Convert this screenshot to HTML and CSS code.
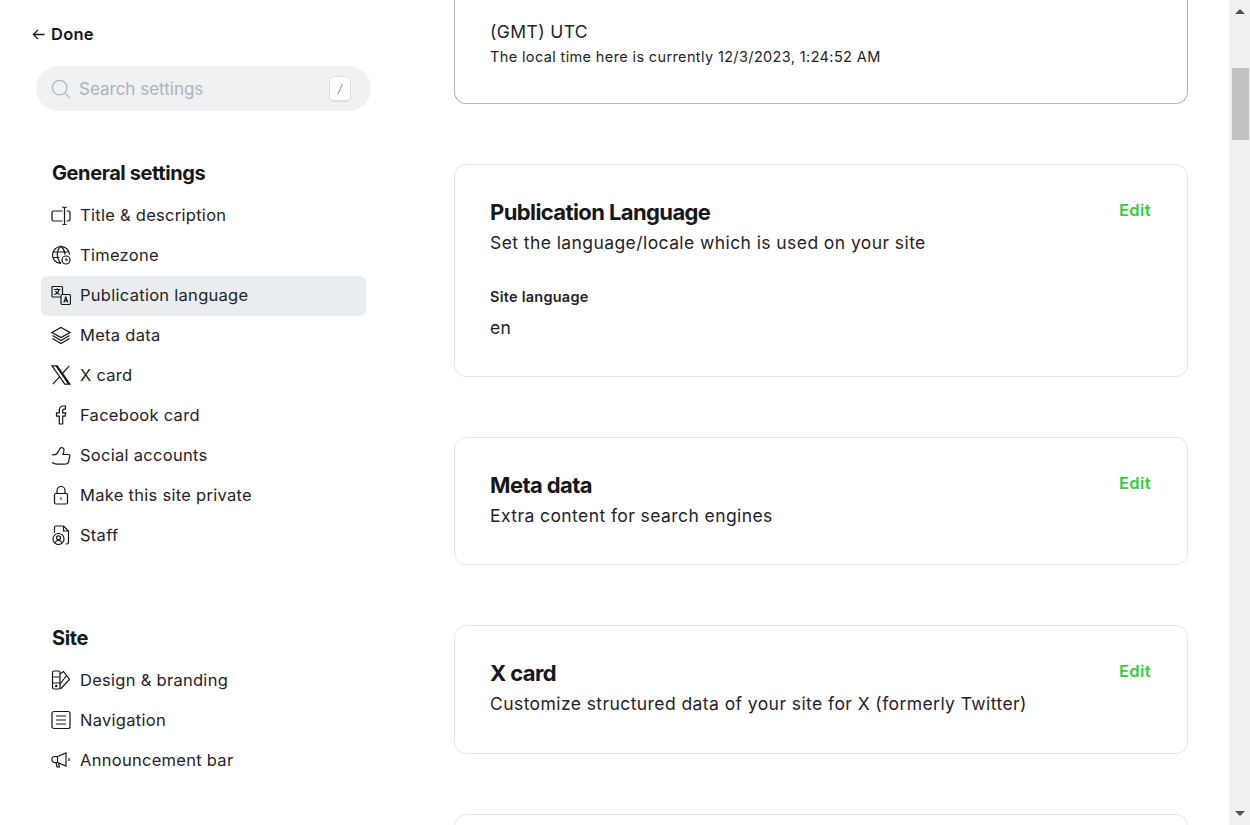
FILE: index.html

```html
<!DOCTYPE html>
<html lang="en">
<head>
    <meta charset="UTF-8">
    <title>Settings</title>
    <link rel="stylesheet" href="styles.css">
</head>
<body>
<div class="page">
    <aside class="sidebar">
        <a class="done" href="#">
            <svg class="done-icon" viewBox="0 0 14 14"><path d="M13.5 7H1.500M6.500 2 1.500 7l5 5"/></svg>
            Done
        </a>
        <div class="search">
            <svg class="search-icon" viewBox="0 0 22 22"><circle cx="9.500" cy="9.500" r="8"/><path d="m15.500 15.500 5.500 5.500"/></svg>
            <span class="search-text">Search settings</span>
            <kbd class="search-key">/</kbd>
        </div>

        <h3 class="nav-title">General settings</h3>
        <ul class="nav-list">
            <li class="nav-item">
                <svg class="nav-icon" viewBox="0 0 20 20"><path d="M11.500 6H2.500A1.500 1.500 0 0 0 1 7.500v7A1.500 1.500 0 0 0 2.500 16h9M15.500 6h2A1.500 1.500 0 0 1 19 7.500v7a1.500 1.500 0 0 1-1.500 1.500h-2M13.500 3v16M11 2c1.200 0 2.500.3 2.500 1.300C13.500 2.300 14.800 2 16 2M11 20c1.200 0 2.500-.3 2.500-1.300 0 1 1.300 1.300 2.500 1.300"/></svg>
                Title &amp; description
            </li>
            <li class="nav-item">
                <svg class="nav-icon" viewBox="0 0 20 20"><path d="M18.500 9.500a8.500 8.500 0 1 0-9 9M1.500 7h17M1.500 12.500h7M10 1c-5 5-5 12 0 17.500M10 1c2.500 2.500 3.800 5.500 4 8.500"/><circle cx="15" cy="15" r="4"/><path d="M15 13v2.200h1.800"/></svg>
                Timezone
            </li>
            <li class="nav-item active">
                <svg class="nav-icon" viewBox="0 0 20 20"><rect x="1" y="1.500" width="10.500" height="10.500" rx="1"/><rect x="10" y="9.500" width="9.500" height="10" rx="1.500" fill="#eaedf0"/><path d="M3 4.500h6.500M6.200 3.300v1.200M8 4.700C7.500 7 5.500 9 3.300 9.500M4.500 6c.8 1.500 2.500 3 4.300 3.500M12.800 17.500l2-5.500 2 5.500M13.500 15.800h2.800"/></svg>
                Publication language
            </li>
            <li class="nav-item">
                <svg class="nav-icon" viewBox="0 0 20 20"><path d="m10 2.500 9 5-9 5-9-5zM1.500 10.500l8.500 5 8.500-5M1.500 13.500l8.500 5 8.500-5"/></svg>
                Meta data
            </li>
            <li class="nav-item">
                <svg class="nav-icon" viewBox="0 0 20 20"><path d="M1 .800h5.200L19 19.200h-5.200zM3.400 .800h1.600l12.700 18.400M18.200 .8 11 9M9 11.300 1.800 19.200"/></svg>
                X card
            </li>
            <li class="nav-item">
                <svg class="nav-icon" viewBox="0 0 20 20"><path d="M14.500 1h-2.200A4 4 0 0 0 8.300 5v2.800H5.500v3.400h2.800V19h3.400v-7.800h2.400l.6-3.400h-3V5.500c0-.8.500-1.300 1.300-1.300h1.500z"/></svg>
                Facebook card
            </li>
            <li class="nav-item">
                <svg class="nav-icon" viewBox="0 0 20 20"><path d="M1 10c2 0 4-.3 5-1.500 1.300-1.500 2-3 3-5 .7-1.400 4-1 4 1 0 1.500-.5 3.500-1 5h5.500c1 0 1.500.7 1.300 1.700l-1.300 6c-.2 1-1 1.600-2 1.700-4 .3-9 .5-12-.3L1 17.500"/></svg>
                Social accounts
            </li>
            <li class="nav-item">
                <svg class="nav-icon" viewBox="0 0 20 20"><rect x="3.500" y="8.500" width="13" height="10.500" rx="1.500"/><path d="M6 8.500V5.500a4 4 0 0 1 8 0v3M10 12.500v2.200"/></svg>
                Make this site private
            </li>
            <li class="nav-item">
                <svg class="nav-icon" viewBox="0 0 20 20"><path d="M3.500 8V2.500A1.500 1.500 0 0 1 5 1h7.500l5 5v11.500a1.500 1.500 0 0 1-1.500 1.500h-1.500M12.500 1v5h5"/><circle cx="7.500" cy="14" r="5.500"/><circle cx="7.500" cy="12.800" r="2"/><path d="M4 17.500c.8-1.500 2-2 3.500-2s2.700.5 3.500 2"/></svg>
                Staff
            </li>
        </ul>

        <h3 class="nav-title nav-title-site">Site</h3>
        <ul class="nav-list">
            <li class="nav-item">
                <svg class="nav-icon" viewBox="0 0 20 20"><rect x="1.500" y="1" width="7.500" height="18" rx="1.500"/><path d="M1.500 7h7.500M1.500 13h7.500M9 4l3.500-2.500 6 8-9 9.500M9 14l7-9"/><circle cx="5.200" cy="16" r=".6"/></svg>
                Design &amp; branding
            </li>
            <li class="nav-item">
                <svg class="nav-icon" viewBox="0 0 20 20"><rect x="1" y="1.500" width="18" height="17" rx="2"/><path d="M5 6h10M5 10h10M5 14h10"/></svg>
                Navigation
            </li>
            <li class="nav-item">
                <svg class="nav-icon" viewBox="0 0 20 20"><path d="M6.500 6.500 15 3v13L6.500 12.500H3.500A2.500 2.500 0 0 1 1 9.500 2.500 2.500 0 0 1 3.500 6.500zM6.500 6.500v6M5 12.500 6 17h2.500l-1-4M18 8v3"/></svg>
                Announcement bar
            </li>
        </ul>
    </aside>

    <main class="content">
        <section class="card card-timezone">
            <p class="value">(GMT) UTC</p>
            <p class="note">The local time here is currently 12/3/2023, 1:24:52 AM</p>
        </section>

        <section class="card card-language">
            <div class="card-head">
                <div>
                    <h2 class="card-title">Publication Language</h2>
                    <p class="card-desc">Set the language/locale which is used on your site</p>
                </div>
                <a class="edit" href="#">Edit</a>
            </div>
            <h4 class="field-label">Site language</h4>
            <p class="value">en</p>
        </section>

        <section class="card">
            <div class="card-head">
                <div>
                    <h2 class="card-title">Meta data</h2>
                    <p class="card-desc">Extra content for search engines</p>
                </div>
                <a class="edit" href="#">Edit</a>
            </div>
        </section>

        <section class="card">
            <div class="card-head">
                <div>
                    <h2 class="card-title">X card</h2>
                    <p class="card-desc">Customize structured data of your site for X (formerly Twitter)</p>
                </div>
                <a class="edit" href="#">Edit</a>
            </div>
        </section>

        <section class="card card-last"></section>
    </main>

    <div class="scrollbar">
        <span class="arrow-up"></span>
        <span class="thumb"></span>
        <span class="arrow-down"></span>
    </div>
</div>
</body>
</html>
```

FILE: styles.css

```css
* { box-sizing: border-box; }
html, body { margin: 0; height: 100%; overflow: hidden; }
body { font-family: Inter, "Liberation Sans", sans-serif; background-color: #fff; color: #15171a; }
h2, h3, h4, p, ul { margin: 0; padding: 0; }
a { text-decoration: none; color: inherit; }

.page { display: flex; height: 825px; overflow: hidden; }

/* sidebar */
.sidebar { width: 454px; flex: none; padding: 24px 0 0 32px; }
.done { display: flex; align-items: center; gap: 6px; height: 20px; font-size: 16.5px; font-weight: 600; letter-spacing: 0.25px; color: #15171a; }
.done-icon { width: 13px; height: 13px; fill: none; stroke: #15171a; stroke-width: 1.4; }
.search { display: flex; align-items: center; width: 335px; height: 45px; margin: 22px 0 0 4px; padding: 0 20px 0 15px; background-color: #eff1f3; border-radius: 23px; }
.search-icon { width: 20px; height: 20px; fill: none; stroke: #abb4be; stroke-width: 1.2; }
.search-text { flex: 1; margin-left: 8px; font-size: 17px; color: #abb4be; }
.search-key { width: 22px; height: 26px; font-family: Inter, sans-serif; font-size: 12px; font-style: italic; line-height: 24px; text-align: center; color: #7c8b9a; background-color: #fff; border: 1px solid #dde1e5; border-bottom-width: 2px; border-radius: 5px; }
.nav-title { margin: 50px 0 0 20px; font-size: 20px; line-height: 24px; font-weight: 700; letter-spacing: -0.4px; color: #15171a; }
.nav-title-site { margin-top: 70px; }
.nav-list { list-style: none; margin: 11px 0 0 9px; width: 325px; }
.nav-item { display: flex; align-items: center; height: 40px; padding: 0 0 2px 10px; font-size: 16.5px; letter-spacing: 0.28px; color: #1f2327; border-radius: 6px; }
.nav-item.active { background-color: #eaedf0; }
.nav-icon { width: 20px; height: 20px; margin-right: 9px; flex: none; fill: none; stroke: #15171a; stroke-width: 1.2; }

/* main column */
.content { flex: none; width: 734px; }
.card { padding: 34px 36px 0 35px; margin-bottom: 60px; border: 1px solid #e3e6e9; border-radius: 12px; height: 128.4px; }
.card-timezone { height: 104px; padding-top: 20px; border-color: #aeb7c1; border-top: 0; border-radius: 0 0 12px 12px; }
.card-language { height: 213px; }
.card-head { display: flex; justify-content: space-between; align-items: flex-start; }
.card-title { font-size: 22px; line-height: 27px; font-weight: 700; letter-spacing: -0.6px; color: #15171a; }
.card-desc { margin-top: 5px; font-size: 17.5px; line-height: 24px; letter-spacing: 0.42px; color: #1f2327; }
.edit { margin-top: 1px; font-size: 16.5px; line-height: 20px; font-weight: 600; letter-spacing: 0.4px; color: #30cf43; }
.field-label { margin-top: 32px; font-size: 14.5px; line-height: 20px; font-weight: 600; letter-spacing: 0.25px; color: #1f2327; }
.value { font-size: 17.5px; line-height: 24px; letter-spacing: 0.4px; color: #1f2327; }
.card-language .value { margin-top: 9px; }
.note { margin-top: 3px; font-size: 14.5px; line-height: 20px; letter-spacing: 0.37px; color: #1f2327; }

/* scrollbar */
.scrollbar { position: fixed; top: 0; right: 0; bottom: 0; width: 21px; display: flex; flex-direction: column; align-items: center; background-color: #f1f1f1; }
.arrow-up { margin-top: 9px; border: 5px solid transparent; border-top: 0; border-bottom-color: #505050; }
.thumb { width: 17px; height: 72px; margin: 54px 0 0 1px; background-color: #c1c1c1; }
.arrow-down { margin-top: auto; margin-bottom: 9px; border: 5px solid transparent; border-bottom: 0; border-top-color: #505050; }
```
